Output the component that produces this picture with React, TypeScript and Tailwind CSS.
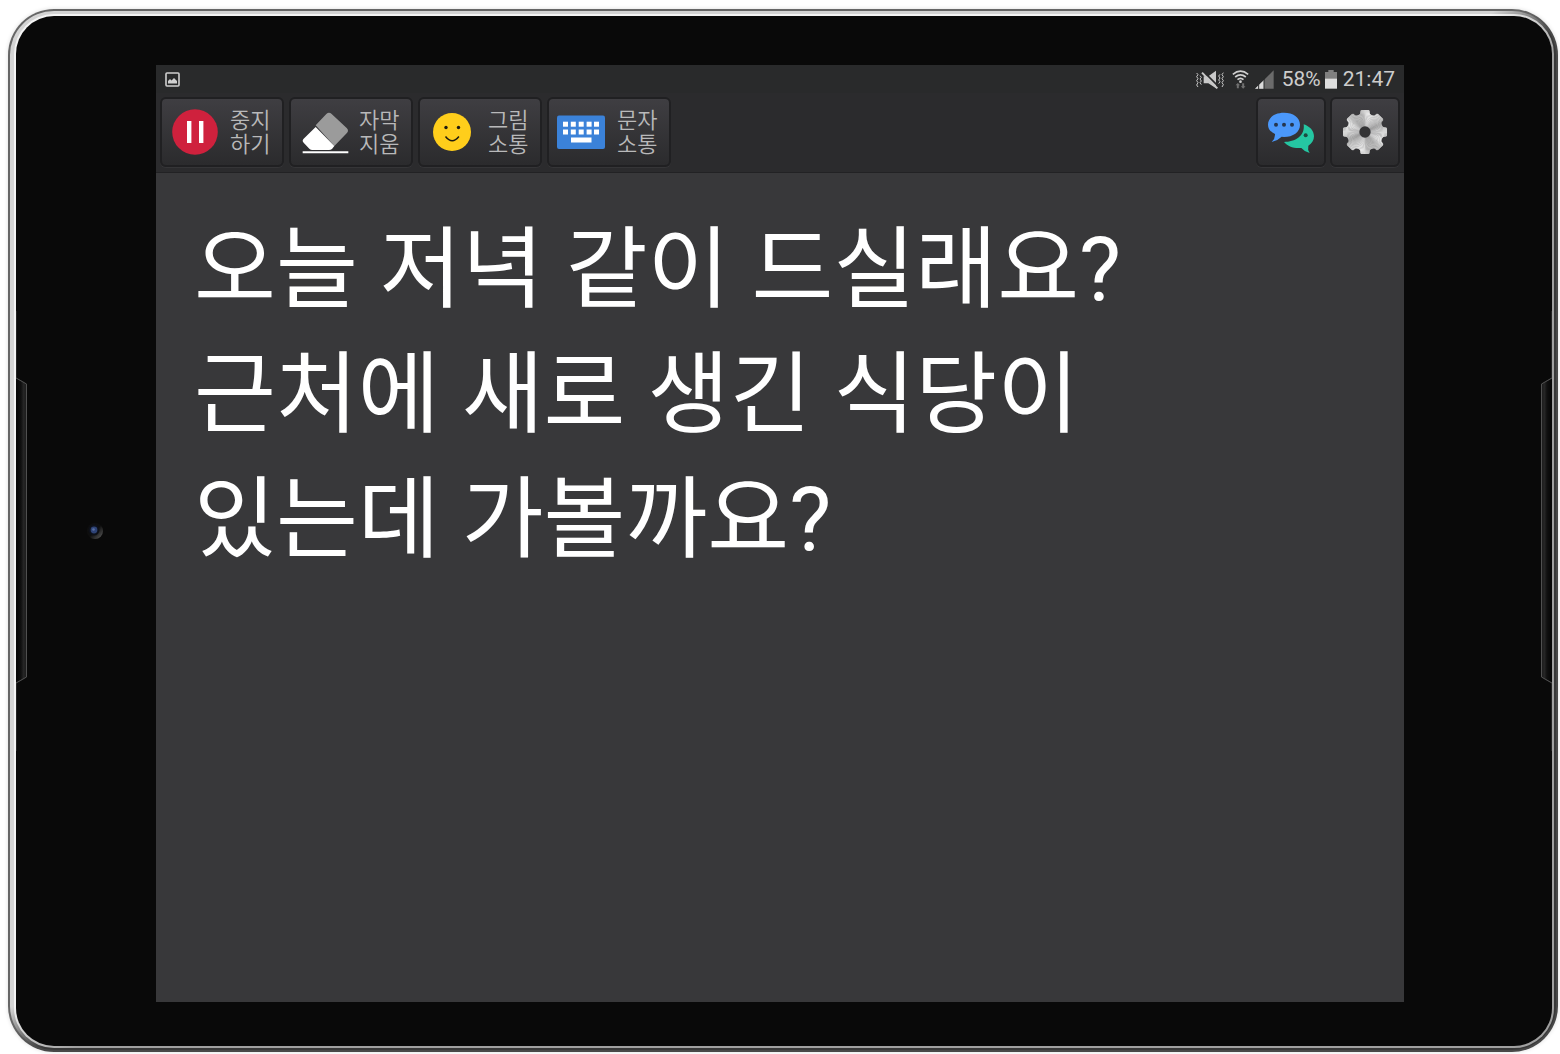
const captions = [
  "오늘 저녁 같이 드실래요?",
  "근처에 새로 생긴 식당이",
  "있는데 가볼까요?",
];

function PauseIcon() {
  return (
    <svg viewBox="0 0 48 48" className="size-12" aria-hidden="true">
      <circle cx="25" cy="24" r="22.8" fill="#cf213d" />
      <path d="M17 13h4.4v22H17zM29 13h4.4v22H29z" fill="#fff" />
    </svg>
  );
}

function EraserIcon() {
  return (
    <svg viewBox="0 0 144 144" className="size-12 overflow-visible" aria-hidden="true">
      <path
        d="M50 52 82 18Q90 10 98 18L143 60Q151 68 143 76L106 114Z"
        fill="#9b9b9b"
      />
      <path d="M50 57 106 114 99 123Q95 126 90 126H40Q35 126 31 122L14 104Q8 98 14 92Z" fill="#fff" />
      <path d="M11 132.500H148" stroke="#fff" strokeWidth="6" />
    </svg>
  );
}

function SmileIcon() {
  return (
    <svg viewBox="0 0 48 48" className="size-12" aria-hidden="true">
      <circle cx="24" cy="24" r="19" fill="#ffce1b" />
      <circle cx="18" cy="19.500" r="1.700" fill="#1d1a10" />
      <circle cx="30.500" cy="19.500" r="1.700" fill="#1d1a10" />
      <path d="M17.500 28.500q6.700 8.400 13.400 0" fill="none" stroke="#1d1a10" strokeWidth="1.500" />
    </svg>
  );
}

function KeyboardIcon() {
  const columns = [6, 13.8, 21.7, 29.6, 37];
  return (
    <svg viewBox="0 0 48 48" className="size-12" aria-hidden="true">
      <rect x="0" y="7.500" width="48" height="33.500" rx="2" fill="#3b82d9" />
      {columns.map((x) => (
        <g key={x} fill="#fff">
          <rect x={x} y="13.700" width="5" height="5" />
          <rect x={x} y="21.500" width="5" height="5" />
        </g>
      ))}
      <rect x="14" y="29.500" width="20.500" height="5" fill="#fff" />
    </svg>
  );
}

function ChatIcon() {
  return (
    <svg viewBox="261 144 144 144" className="size-12" aria-hidden="true">
      <path
        d="M312 158C339 158 360 172 360 194C360 216 339 231 312 231L305 230Q293 242 275 246Q286 235 285 222Q264 212 264 194C264 172 285 158 312 158Z"
        fill="#4b98fb"
      />
      <circle cx="288" cy="194" r="6" fill="#26364f" />
      <circle cx="312" cy="194" r="6" fill="#26364f" />
      <circle cx="336" cy="194" r="6" fill="#26364f" />
      <path
        d="M371 193C389 199 402 212 402 229C402 241 396 250 385 257Q382 269 389 279Q373 275 364 264C341 266 322 259 312 246C345 246 376 228 371 193Z"
        fill="#25c6a2"
      />
      <circle cx="377" cy="226" r="6" fill="#1d4a41" />
    </svg>
  );
}

const polar = (r: number, deg: number) => {
  const a = (deg * Math.PI) / 180;
  return `${(Math.sin(a) * r).toFixed(2)} ${(-Math.cos(a) * r).toFixed(2)}`;
};

const gearOutline =
  "M" +
  Array.from({ length: 8 }, (_, i) => i * 45)
    .map((a) =>
      [
        polar(55, a - 19),
        polar(57, a - 15),
        polar(65, a - 12),
        polar(67, a - 9),
        polar(67, a + 9),
        polar(65, a + 12),
        polar(57, a + 15),
        polar(55, a + 19),
      ].join("L"),
    )
    .join("L") +
  "Z";

// brushed metal: thin wedges around the hub
const wedges = Array.from({ length: 120 }, (_, i) => {
  const a = i * 3;
  const t = (a * Math.PI) / 180;
  const v = Math.round(208 + 22 * Math.sin(4 * t + 0.4) + 6 * Math.sin(10 * t));
  return { a, color: `rgb(${v} ${v} ${v})` };
});

function GearIcon() {
  return (
    <svg viewBox="-72 -72 144 144" className="size-12" aria-hidden="true">
      <clipPath id="gear">
        <path d={gearOutline} />
      </clipPath>
      <g clipPath="url(#gear)">
        {wedges.map((w) => (
          <path key={w.a} d={`M0 0L${polar(80, w.a)}L${polar(80, w.a + 4)}Z`} fill={w.color} />
        ))}
      </g>
      <circle r="17" fill="#333335" />
    </svg>
  );
}

function StatusBar() {
  return (
    <div className="flex h-7 items-center justify-between bg-[#292a2b] pr-[9px] pl-2 text-[#cdcdcd]">
      <svg viewBox="0 0 17 17" className="size-[17px]" fill="none" aria-hidden="true">
        <rect x="2" y="2" width="13" height="13" rx="1" stroke="#d0d0d0" strokeWidth="1.600" />
        <path d="M4 12.500V10l2-2 1.500 1.500L10 7l3 3v2.500Z" fill="#d0d0d0" />
      </svg>
      <div className="flex items-center">
        <svg viewBox="45 28 84 57" className="mr-2 h-[19px] w-7" aria-hidden="true">
          <g fill="none" stroke="#c8c8c8" strokeWidth="3">
            <path d="m47 37 4 5-4 6 4 6-4 6 4 6-4 7 4 6M57 45l4 5-4 5 4 6-4 5 4 6M117 41l-4 5 4 6-4 6 4 5-4 6M127 36l-4 6 4 6-4 6 4 6-4 6 4 6-4 7" />
          </g>
          <path d="M68 47H82L105 30V83L82 68H68Z" fill="#c8c8c8" />
          <path d="m67 32 45 45" stroke="#292a2b" strokeWidth="5" />
          <path d="m63 36 46 47" stroke="#c8c8c8" strokeWidth="6" />
        </svg>
        <svg viewBox="156 26 50 57" className="mr-1.5 h-[19px] w-[17px]" aria-hidden="true">
          <g fill="none" stroke="#d0d0d0" strokeWidth="5">
            <path d="M158 39Q181 20 204 39M165 47Q181 34 197 47M172 55Q181 47 190 55" />
          </g>
          <circle cx="181" cy="61" r="4" fill="#d0d0d0" />
          <path d="m173 65 7 7h-4v9h-6v-9h-4zM189 82l-7-7h4v-9h6v9h4z" fill="#707070" />
        </svg>
        <svg viewBox="222 27 57 57" className="mr-2 size-[19px]" aria-hidden="true">
          <path d="M222 83 278 28V83Z" fill="#6b6b6b" />
          <path d="M222 83 249 57V83Z" fill="#dadada" />
          <path d="M233 60V84M249 45V84" stroke="#292a2b" strokeWidth="3" />
        </svg>
        <span className="font-[Roboto,sans-serif] text-[21px] leading-7">58%</span>
        <svg viewBox="435 27 36 57" className="mr-1.5 ml-1 h-[19px] w-3" aria-hidden="true">
          <path d="M445 27H461V33H471V54H435V33H445Z" fill="#808080" />
          <path d="M435 53H471V83H435Z" fill="#dedede" />
        </svg>
        <time className="font-[Roboto,sans-serif] text-[21px] leading-7">21:47</time>
      </div>
    </div>
  );
}

const buttonStyle =
  "flex h-[70px] items-center rounded-md border-2 border-[#202022] bg-linear-to-b from-[#3f3e42] to-[#2b2b2d] shadow-[0_1px_0_#353537]";

function ToolButton({ icon, lines }: { icon: React.ReactNode; lines: string[] }) {
  return (
    <button type="button" className={`${buttonStyle} w-31 gap-3 pl-2`}>
      {icon}
      <span className="flex flex-col pt-0.5 font-[Roboto,'Noto_Sans_CJK_KR',sans-serif] text-[22px] leading-6 font-[350] whitespace-nowrap text-[#b9b9ba]">
        {lines.map((line) => (
          <span key={line}>{line}</span>
        ))}
      </span>
    </button>
  );
}

function IconButton({ icon, label }: { icon: React.ReactNode; label: string }) {
  return (
    <button type="button" aria-label={label} className={`${buttonStyle} w-[70px] justify-center`}>
      {icon}
    </button>
  );
}

function Toolbar() {
  return (
    <div className="flex justify-between border-b border-[#222224] bg-[#2b2b2d] px-1 pt-1 pb-[5px]">
      <div className="flex gap-[5px]">
        <ToolButton icon={<PauseIcon />} lines={["중지", "하기"]} />
        <ToolButton icon={<EraserIcon />} lines={["자막", "지움"]} />
        <ToolButton icon={<SmileIcon />} lines={["그림", "소통"]} />
        <ToolButton icon={<KeyboardIcon />} lines={["문자", "소통"]} />
      </div>
      <div className="flex gap-1">
        <IconButton icon={<ChatIcon />} label="대화" />
        <IconButton icon={<GearIcon />} label="설정" />
      </div>
    </div>
  );
}

function SideGrip({ className }: { className?: string }) {
  return (
    <svg viewBox="0 0 12 440" className={`h-[440px] w-3 shrink-0 ${className ?? ""}`} aria-hidden="true">
      <defs>
        <linearGradient id="grip">
          <stop offset="0" stopColor="#050505" />
          <stop offset="0.45" stopColor="#101010" />
          <stop offset="0.7" stopColor="#252525" />
          <stop offset="1" stopColor="#1c1c1c" />
        </linearGradient>
      </defs>
      <path d="M0.500 0V67L10.500 73V366L0.500 372V440" fill="url(#grip)" stroke="#222" />
      <path d="M0 67 10.500 73V366L0 372" fill="none" stroke="#505050" />
    </svg>
  );
}

function Camera() {
  return (
    <svg viewBox="0 0 18 18" className="ml-[58px] size-[18px]" aria-hidden="true">
      <defs>
        <linearGradient id="lens" x1="0" y1="0" x2="1" y2="1">
          <stop offset="0.5" stopColor="#0e0e0e" />
          <stop offset="0.85" stopColor="#484848" />
        </linearGradient>
      </defs>
      <circle cx="9" cy="9" r="8" fill="url(#lens)" />
      <circle cx="8" cy="8" r="5.500" fill="#0d1018" />
      <circle cx="8" cy="8" r="3.400" fill="#2d4275" />
      <circle cx="7.500" cy="7.500" r="1.300" fill="#596fa3" />
    </svg>
  );
}

export default function App() {
  return (
    <div className="flex min-h-screen bg-white pt-[9px] pr-0.5 pb-0.5 pl-2">
      {/* metal rim: dark edge, lit band, thin inner highlight */}
      <div className="flex flex-1 rounded-[46px] bg-linear-to-br from-[#666] from-49% to-[#484848] to-51% p-0.5 shadow-[0_0_4px_#0002]">
        <div className="flex flex-1 rounded-[44px] bg-linear-to-br from-[#d4d4d4] from-48% to-[#383838] to-51% pt-[3px] pr-0.5 pb-0.5 pl-1">
          <div className="flex flex-1 rounded-[40px] bg-linear-to-br from-[#f4f4f4] from-48% to-[#a0a0a0] to-52% p-0.5">
            <div className="flex flex-1 rounded-[38px] bg-[#090909]">
              <div className="flex w-[140px] shrink-0 items-center">
                <SideGrip />
                <Camera />
              </div>
              <main className="mt-[49px] mb-11 flex min-w-0 flex-1 flex-col bg-[#38383a]">
                <StatusBar />
                <Toolbar />
                <section className="flex-1 pt-[34px] pl-[38px] font-[Roboto,'Noto_Sans_CJK_KR',sans-serif] text-[89px] leading-[125px] text-white">
                  {captions.map((line) => (
                    <p key={line}>{line}</p>
                  ))}
                </section>
              </main>
              <div className="flex w-[148px] shrink-0 items-center justify-end">
                <SideGrip className="-scale-x-100" />
              </div>
            </div>
          </div>
        </div>
      </div>
    </div>
  );
}
